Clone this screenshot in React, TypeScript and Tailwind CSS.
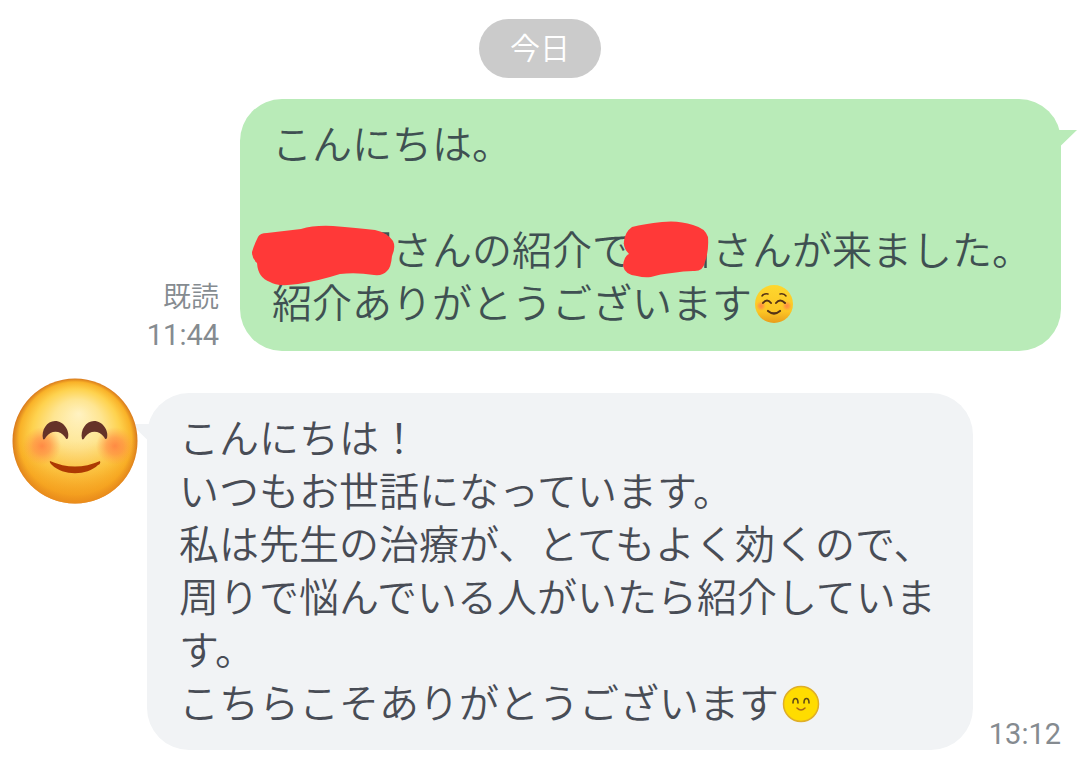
import type { ReactNode } from "react";
import { clsx } from "clsx";

interface BubbleProps {
  side: "sent" | "received";
  children: ReactNode;
}

function Bubble({ side, children }: BubbleProps) {
  const sent = side === "sent";

  return (
    <div
      className={clsx(
        "relative rounded-[42px] pt-[17px] pr-[29px] pl-8 text-[40px] leading-[53px]",
        sent ? "bg-[#b9ebb8] pb-[23px] text-[#3f5052]" : "bg-[#f1f3f5] pb-[22px] text-[#484c55]"
      )}
    >
      <svg
        aria-hidden="true"
        viewBox="0 0 20 20"
        className={clsx(
          "absolute top-[31px] h-5 w-5",
          sent ? "-right-4 fill-[#b9ebb8]" : "-left-4 -scale-x-100 fill-[#f1f3f5]"
        )}
      >
        <path d="M0 0H20L4 15.500V20H0Z" />
      </svg>
      {children}
    </div>
  );
}

function HiddenName({ size }: { size: "long" | "short" }) {
  if (size === "long") {
    return (
      <span className="relative inline-block h-8 w-[120px]">
        <svg aria-hidden="true" viewBox="0 0 144 64" className="absolute -top-2 -left-5 h-16 w-36 fill-[#ff3938]">
          <path d="M124 8.500H136V16" fill="none" stroke="#3f5052" strokeWidth="2.500" />
          <path d="M6 12Q8 8 15 8Q32 6 49 4Q62 0 81 1Q105 3 123 5Q136 8 141 16Q144 22 140 31Q139 43 135 46Q131 51 122 50Q104 47 88 49Q66 56 46 59Q25 62 18 57Q6 53 5 38Q0 34 0 27Q2 20 6 12Z" />
        </svg>
      </span>
    );
  }

  return (
    <span className="relative inline-block h-8 w-20">
      <svg aria-hidden="true" viewBox="0 0 88 60" className="absolute -top-3 -left-2.5 h-[60px] w-[88px] fill-[#ff3938]">
        <path d="M83.500 30V47" stroke="#3f5052" strokeWidth="2.500" />
        <path d="M10 6Q22 3 40 1Q56 -1 71 4Q83 7 86 16Q87 30 83 41Q81 51 71 50Q62 50 50 52Q38 53 29 56Q22 57 15 55Q3 54 1 45Q2 35 7 33Q1 27 2 20Q3 11 10 6Z" />
      </svg>
    </span>
  );
}

function Avatar() {
  return (
    <svg role="img" aria-label="Smiling face" viewBox="0 0 126 126" className="h-[126px] w-[126px] shrink-0">
      <defs>
        <radialGradient id="face" cx="50%" cy="50%" r="50%" fx="53%" fy="28%">
          <stop offset="0" stopColor="#fff2c2" />
          <stop offset=".4" stopColor="#fee591" />
          <stop offset=".7" stopColor="#fed24e" />
          <stop offset=".9" stopColor="#f9b228" />
          <stop offset="1" stopColor="#d8791c" />
        </radialGradient>
        <linearGradient id="shade" x1="0" y1="0" x2="0" y2="1">
          <stop offset=".5" stopColor="#f9a51c" stopOpacity="0" />
          <stop offset="1" stopColor="#f0921a" stopOpacity=".75" />
        </linearGradient>
        <radialGradient id="blush">
          <stop offset="0" stopColor="#ff8242" stopOpacity=".9" />
          <stop offset=".45" stopColor="#ff8a45" stopOpacity=".65" />
          <stop offset="1" stopColor="#ff9a45" stopOpacity="0" />
        </radialGradient>
      </defs>
      <circle cx="63" cy="63" r="62.500" fill="url(#face)" />
      <circle cx="63" cy="63" r="62.500" fill="url(#shade)" />
      <circle cx="30" cy="68" r="19" fill="url(#blush)" />
      <circle cx="103" cy="68" r="19" fill="url(#blush)" />
      <g fill="#663328">
        <path d="M31 61C29 52 35 43 43 43C52 43 58 53 56 60C55 62 54 61 53 59C48 52 39 52 34 59C33 61 32 62 31 61Z" />
        <path d="M70 61C68 52 74 43 82 43C91 43 97 53 95 60C94 62 93 61 92 59C87 52 78 52 73 59C72 61 71 62 70 61Z" />
      </g>
      <path d="M38 83Q63 94 88 83Q89 86 86 87C75 98 51 98 40 87Q37 84 38 83Z" fill="#ad3903" />
    </svg>
  );
}

function BlushEmoji() {
  return (
    <svg role="img" aria-label="Blushing smile" viewBox="0 0 40 40" className="mt-1 ml-0.5 inline-block h-10 w-10">
      <defs>
        <linearGradient id="gold" x1="0" y1="0" x2="0" y2="1">
          <stop offset="0" stopColor="#fed72e" />
          <stop offset=".7" stopColor="#fcc524" />
          <stop offset="1" stopColor="#e99d1b" />
        </linearGradient>
      </defs>
      <circle cx="20" cy="20" r="19" fill="url(#gold)" />
      <circle cx="7" cy="22" r="5" fill="url(#blush)" />
      <circle cx="33" cy="22" r="5" fill="url(#blush)" />
      <g fill="none" stroke="#553316" strokeLinecap="round">
        <path d="M8 12Q10 9 14 10M26 10Q30 9 32 12" strokeWidth="1.500" />
        <path d="M9 19Q13 14 17 19M22 19Q26 14 31 19" strokeWidth="2" />
        <path d="M14 27Q20 32 26 27" strokeWidth="2.200" />
      </g>
    </svg>
  );
}

function PlainEmoji() {
  return (
    <svg role="img" aria-label="Smile" viewBox="0 0 40 40" className="mt-1 ml-0.5 inline-block h-10 w-10">
      <circle cx="20" cy="20" r="17.500" fill="#ffdc00" stroke="#dfae28" strokeWidth="1.500" />
      <g fill="none" strokeLinecap="round">
        <path d="M12 19C12 13 17 13 17 19M23 19C23 13 28 13 28 19" stroke="#604a16" strokeWidth="1.600" />
        <path d="M16 24Q20 28 24 24" stroke="#a8651b" strokeWidth="1.500" />
      </g>
    </svg>
  );
}

export default function App() {
  return (
    <main className="flex min-h-screen flex-col bg-white pt-[19px] pb-7 font-['Noto_Sans_CJK_JP',sans-serif] font-[350]">
      <div className="self-center rounded-full bg-[#cbcbcb] px-[31px] pt-[7px] pb-3 text-[30px] leading-10 text-white">
        今日
      </div>

      <section className="mt-[21px] flex items-end justify-end gap-[21px] pr-[19px] pl-4">
        <div className="text-right text-[#858b90]">
          <p className="mb-1.5 text-[28px] leading-9">既読</p>
          <p className="font-[Roboto,sans-serif] text-[29px] leading-8 font-normal">11:44</p>
        </div>
        <Bubble side="sent">
          <p>こんにちは。</p>
          <br />
          <p>
            <HiddenName size="long" />
            さんの紹介で
            <HiddenName size="short" />
            さんが来ました。
          </p>
          <p className="flex items-center">
            紹介ありがとうございます
            <BlushEmoji />
          </p>
        </Bubble>
      </section>

      <section className="mt-[42px] flex items-start pr-[19px] pl-3">
        <div className="z-10 -mt-[15px] mr-[9px] shrink-0">
          <Avatar />
        </div>
        <div className="flex min-w-0 flex-1 items-end gap-4">
          <Bubble side="received">
            <p>こんにちは！</p>
            <p>いつもお世話になっています。</p>
            <p>私は先生の治療が、とてもよく効くので、</p>
            <p>周りで悩んでいる人がいたら紹介しています。</p>
            <p className="flex items-center">
              こちらこそありがとうございます
              <PlainEmoji />
            </p>
          </Bubble>
          <time className="font-[Roboto,sans-serif] text-[29px] leading-8 font-normal text-[#858b90]">13:12</time>
        </div>
      </section>
    </main>
  );
}
